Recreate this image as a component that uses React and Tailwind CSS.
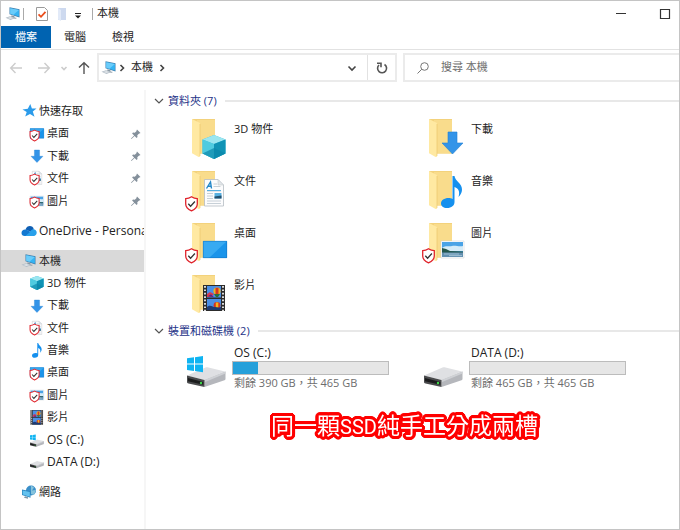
import { useState } from 'react';
import clsx from 'clsx';

function Shield({ x = 0, y = 0, scale = 1 }) {
  return (
    <g transform={`translate(${x} ${y}) scale(${scale})`}>
      <path
        d="M6.500 .8C8.300 2 10.300 2.600 12.300 2.700V8c0 3.300-2.600 5.400-5.800 6.800C3.300 13.400.7 11.300.7 8V2.700C2.700 2.600 4.700 2 6.500.8z"
        fill="#fff"
        stroke="#e0242c"
        strokeWidth="1.300"
      />
      <path d="M3.300 7.700l2.300 2.500 4.300-4.700" fill="none" stroke="#333" strokeWidth="1.300" />
    </g>
  );
}

function Folder() {
  return (
    <>
      <path d="M8 4h23v34.500H14z" fill="#f3d27c" />
      <path d="M13 5h18v33.500H13z" fill="#f9dc8c" />
      <path d="M8 4l7 3.500c.8.400 1 .8 1 1.700V40.500c0 1.500-.6 2-1.800 1.300L8 38.300z" fill="#ffe9a2" />
      <path d="M16 9v32" stroke="#e8c467" strokeWidth=".6" />
    </>
  );
}

function Cube() {
  return (
    <>
      <path d="M12 0l11.500 4.500v14L12 24 .5 18.500v-14z" fill="#35b8d4" />
      <path d="M.5 4.500L12 0l11.500 4.500L12 9z" fill="#9be6f0" />
      <path d="M.5 4.500L12 9v15L.5 18.500z" fill="#4fcbe0" />
      <path d="M12 9l11.500-4.500v14L12 24z" fill="#1093b5" />
      <path d="M.5 18.500L12 13l11.500 5.500L12 24z" fill="#0b86aa" opacity=".7" />
    </>
  );
}

function PaperSheet() {
  return (
    <>
      <path d="M.5.5h13.500l5.500 5.500v21H.5z" fill="#fcfcfd" stroke="#b5bcc3" strokeWidth=".8" />
      <path d="M14 .5V6h5.500z" fill="#e3e7ea" stroke="#c3c9cf" strokeWidth=".6" />
      <path d="M2.500 9.500L6.500 3l1 6.500M4 7.300h3.200" fill="none" stroke="#2387c8" strokeWidth="1.400" />
      <path d="M9.500 5H13M9.500 7.500h7M3 12h14M3 14.500h6M3 17h6M3 19.500h6M3 22h14M3 24.500h14" stroke="#b9c4cd" strokeWidth=".8" />
      <path d="M3 11.500h14" stroke="#58b0e0" strokeWidth="1" />
      <path d="M10.500 14h7v5.500h-7z" fill="#58b0e0" />
      <path d="M10.500 17.500l7-1v3h-7z" fill="#24506e" />
    </>
  );
}

function Photo() {
  return (
    <>
      <path d="M0 0h23v17H0z" fill="#fff" stroke="#c9ced3" strokeWidth=".5" />
      <path d="M1 1h21v15H1z" fill="#4aa3e6" />
      <path d="M1 7c4-3 7-1 10-2s7 1 11 0v5H1z" fill="#d4ebf8" />
      <path d="M1 7l4 1 4 2 13 .5v1.500H1z" fill="#24574d" />
      <path d="M1 11.500h21V16H1z" fill="#6290b0" />
      <path d="M3 13h15M8 14.600h13" stroke="#b7d2e1" strokeWidth=".7" />
    </>
  );
}

function Film() {
  return (
    <>
      <path d="M0 0h22v26H0z" fill="#2c2c2c" />
      <path d="M4 1h14v11.500H4zM4 14h14v11H4z" fill="#4b8fe6" />
      <path d="M2 1v25M20 1v25" stroke="#eee" strokeWidth="1.800" strokeDasharray="1.700 1.700" />
      <circle cx="14" cy="6" r="3.600" fill="#f0b51f" />
      <path d="M12.500 2.800h3v6.500h-3z" fill="#d63422" />
      <path d="M11 9h6l-2 3h-2z" fill="#27723a" />
      <path d="M4 9l3-2 4 2-3 3H4z" fill="#d63b52" />
      <path d="M5 11.300l3-2 3 3z" fill="#5c2484" />
      <circle cx="14" cy="20.500" r="3.400" fill="#d63422" />
      <path d="M12.800 17.500h2.500v6h-2.500z" fill="#f0b51f" />
      <path d="M4 22c3-3 6 0 8 0s4 1 6 0v3H4z" fill="#1d3a73" />
    </>
  );
}

function Note() {
  return (
    <path
      d="M11.500 0h2c.5 5 8 7.500 7.500 14-.2 2.800-1.500 5-3.500 7 1.500-5 .5-8.500-4-10v15c0 3.600-3 6-7.500 6C2.300 32 0 30 0 27.500c0-3.200 3.200-5.500 7.500-5.500 1.500 0 3 .3 4 1z"
      fill="#1590ee"
    />
  );
}

function DownArrow() {
  return <path d="M6 0h9v11h6L10.500 22 0 11h6z" fill="#3394e8" stroke="#2280d4" strokeWidth=".6" />;
}

function Desktop() {
  return (
    <>
      <path d="M0 0h24v17H0z" fill="#1a94ea" />
      <path d="M0 0h24L6 17H0z" fill="#38aaf2" />
      <path d="M.3.300h23.400v16.400H.3z" fill="none" stroke="#1477c6" strokeWidth=".6" />
    </>
  );
}

function Drive() {
  return (
    <>
      <path d="M0 8.500L18.500.5c1-.4 2-.4 3 0L38 4.500 17.500 13z" fill="#dfe0e3" />
      <path d="M17.500 13L38.500 4.500v7.500c0 .6-.3 1-1 1.300L17.500 20z" fill="#b5b7bc" />
      <path d="M17.500 13L38.500 4.500v2L17.500 15.300z" fill="#cfd1d5" />
      <path d="M0 8.500L17.500 13v7L1.500 16.500c-1-.2-1.500-.7-1.500-1.700z" fill="#4a4b4d" />
      <path d="M1 11l15.300 4v2.800L1 14.300z" fill="#1b1c1d" />
      <circle cx="14" cy="16" r="1.200" fill="#3fd94a" />
    </>
  );
}

function WindowsLogo() {
  return (
    <path d="M0 2.300L7 1.300V7.600H0zM8 1.200L16 0v7.600H8zM0 8.600h7v6.300l-7-1zM8 8.600h8v7.600l-8-1.200z" fill="#0fb4f2" />
  );
}

// large icons share a 48px box, the overlay sits over the folder
const BIG = {
  cube: <g transform="translate(18 20)"><Cube /></g>,
  doc: <g transform="translate(20 12)"><PaperSheet /></g>,
  desktop: <g transform="translate(19 22)"><Desktop /></g>,
  film: <g transform="translate(19 14)"><Film /></g>,
  down: <g transform="translate(21 17)"><DownArrow /></g>,
  note: <g transform="translate(20 9)"><Note /></g>,
  photo: <g transform="translate(20 22)"><Photo /></g>,
};

function FolderIcon({ kind, synced }) {
  return (
    <svg className="size-12 shrink-0" viewBox="0 0 48 48" aria-hidden="true">
      <Folder />
      {BIG[kind]}
      {synced && <Shield x={1} y={29} />}
    </svg>
  );
}

function DriveIcon({ system }) {
  return (
    <svg className="size-12 shrink-0" viewBox="0 0 48 48" aria-hidden="true">
      <g transform="translate(3 22)"><Drive /></g>
      {system && <g transform="translate(3 11)"><WindowsLogo /></g>}
    </svg>
  );
}

function PcIcon() {
  return (
    <>
      <path d="M4.500 1.300L14.500 3.300v8.200L4.500 8.300z" fill="#3e7fae" />
      <path d="M5.200 2.200l8.700 1.800v6.500L5.200 7.700z" fill="#35b4f3" />
      <path d="M5.200 2.200l8.700 1.800-5.500 4.700-3.200-1z" fill="#6accfa" />
      <path d="M6.500 9.200l3 1v1.300l2.500.4-1.500.8-4.500-1z" fill="#8c9aa5" />
      <path d="M.5 11.800l4.500-1.500 5.500 1.700L5.500 14z" fill="#b4bfc8" />
      <path d="M2 11.900l3.200-1 3.500 1-3.300 1.200z" fill="#dfe4e8" />
    </>
  );
}

const SMALL = {
  star: <path d="M9.300 1l1.600 4.500 4.600.1-3.700 3 1.700 5.100L9 11l-4.800 2.600 1.500-4.500L1.500 6.600l5.300-.9z" fill="#2b9bea" />,
  cloud: (
    <>
      <path d="M4.500 6.500C5.300 4 7 3 8.800 3c2 0 3.500 1.200 4 3.200L10 9z" fill="#0f5fb4" />
      <path d="M.5 10c0-2.300 1.800-3.700 4-3.500C6 6.600 9 8.500 14 11.800c-.6.800-1.300 1.200-2.300 1.200h-8C1.800 13 .5 11.800.5 10z" fill="#1378d1" />
      <path d="M12.300 6.300c2 0 3.400 1.400 3.400 3.300 0 2-1.300 3.400-3.400 3.400h-8L8.500 9.500c1.300-1.800 2.200-3 3.800-3.200z" fill="#28a0ea" />
    </>
  ),
  pc: <PcIcon />,
  cube: <g transform="translate(1 1) scale(.58)"><Cube /></g>,
  down: <g transform="translate(2 2) scale(.57)"><DownArrow /></g>,
  doc: (
    <>
      <g transform="translate(3 1) scale(.5)"><PaperSheet /></g>
      <Shield x={.5} y={3.500} scale={.78} />
    </>
  ),
  desktop: (
    <>
      <g transform="translate(1 2.500) scale(.58)"><Desktop /></g>
      <Shield x={.5} y={3.500} scale={.78} />
    </>
  ),
  photo: (
    <>
      <g transform="translate(1 3) scale(.6)"><Photo /></g>
      <Shield x={.5} y={3.500} scale={.78} />
    </>
  ),
  note: <g transform="translate(3 1) scale(.46)"><Note /></g>,
  film: <g transform="translate(1.500 1) scale(.57)"><Film /></g>,
  osdrive: (
    <>
      <g transform="translate(1 7.500) scale(.36)"><Drive /></g>
      <g transform="translate(1 2.500) scale(.36)"><WindowsLogo /></g>
    </>
  ),
  drive: <g transform="translate(1 7) scale(.36)"><Drive /></g>,
  network: (
    <>
      <circle cx="10" cy="6.500" r="5" fill="#3a8fc9" />
      <path d="M10 1.500l3 2-2 3 4-.5-2 5-3-1z" fill="#86c3dc" />
      <path d="M1 5.500l8.500 1.800v6.500L1 11z" fill="#2a86c0" />
      <path d="M1.700 6.400l7.100 1.500v4.900L1.700 10.500z" fill="#63c2ef" />
      <path d="M4 12.200l3 1v1.500l-4-1z" fill="#7e96a6" />
    </>
  ),
};

function SmallIcon({ kind }) {
  return (
    <svg className="size-4 shrink-0" viewBox="0 0 16 16" aria-hidden="true">
      {SMALL[kind]}
    </svg>
  );
}

function Pin() {
  return (
    <svg className="size-3 shrink-0" viewBox="0 0 12 12" aria-hidden="true">
      <path d="M7 1.500l3.500 3.500-1 .5-.4-.1-1.800 1.800.2 1.800-.9.900-2-2L1.500 11l-.5-.5 3.100-3.100-2-2 .9-.9 1.800.2 1.800-1.800-.1-.4z" fill="#84909b" />
    </svg>
  );
}

function Chevron({ className, d = 'M3.500 2l3 3-3 3', width = 1.6 }) {
  return (
    <svg className={clsx('size-2.5 shrink-0', className)} viewBox="0 0 10 10" aria-hidden="true">
      <path d={d} fill="none" stroke="currentColor" strokeWidth={width} />
    </svg>
  );
}

function NavArrow({ d, label, disabled }) {
  return (
    <button type="button" aria-label={label} disabled={disabled} className="text-[#555] disabled:text-[#ccc]">
      <svg className="size-3.5" viewBox="0 0 14 14" aria-hidden="true">
        <path d={d} fill="none" stroke="currentColor" strokeWidth="1.400" />
      </svg>
    </button>
  );
}

const QUICK = [
  { icon: 'desktop', label: '桌面' },
  { icon: 'down', label: '下載' },
  { icon: 'doc', label: '文件' },
  { icon: 'photo', label: '圖片' },
];

const PC = [
  { icon: 'cube', label: '3D 物件' },
  { icon: 'down', label: '下載' },
  { icon: 'doc', label: '文件' },
  { icon: 'note', label: '音樂' },
  { icon: 'desktop', label: '桌面' },
  { icon: 'photo', label: '圖片' },
  { icon: 'film', label: '影片' },
  { icon: 'osdrive', label: 'OS (C:)', latin: true },
  { icon: 'drive', label: 'DATA (D:)', latin: true },
];

const FOLDERS = [
  { icon: 'cube', label: '3D 物件' },
  { icon: 'down', label: '下載' },
  { icon: 'doc', label: '文件', synced: true },
  { icon: 'note', label: '音樂' },
  { icon: 'desktop', label: '桌面', synced: true },
  { icon: 'photo', label: '圖片', synced: true },
  { icon: 'film', label: '影片' },
];

const DRIVES = [
  { label: 'OS (C:)', free: 390, total: 465, system: true },
  { label: 'DATA (D:)', free: 465, total: 465 },
];

function TreeRow({ icon, label, child, pinned, selected, latin }) {
  return (
    <a
      href="#"
      aria-current={selected ? 'page' : undefined}
      className={clsx(
        'flex min-h-0 flex-1 items-center gap-0.5 overflow-hidden whitespace-nowrap',
        child ? 'pl-7' : 'pl-5',
        selected && 'bg-[#d9d9d9]'
      )}
    >
      <SmallIcon kind={icon} />
      <span className={clsx(latin && 'text-xs')}>{label}</span>
      {pinned && <span className="mr-0.5 ml-auto"><Pin /></span>}
    </a>
  );
}

function Section({ title, children }) {
  return (
    <section>
      <h2 className="flex h-4 items-center text-[#1e3287]">
        <Chevron className="mr-1 text-[#555]" d="M1 3l4 4 4-4" width={1.2} />
        {title}
        <span className="ml-2 h-0.5 flex-1 bg-[#e8e8e8]" />
      </h2>
      <div className="grid grid-cols-[repeat(2,237px)] pt-1.5 pl-[30px]">{children}</div>
    </section>
  );
}

function DriveTile({ label, free, total, system }) {
  const used = ((total - free) / total) * 100;
  return (
    <div className="flex h-13">
      <DriveIcon system={system} />
      <div className="flex-1">
        <p className="pl-0.5 text-xs leading-4">{label}</p>
        <div className="h-3.5 w-[157px] border border-[#bcbcbc] bg-[#e6e6e6]">
          <div className="h-full bg-[#26a0da]" style={{ width: `${used}%` }} />
        </div>
        <p className="pl-0.5 leading-4 text-[#6d6d6d]">{`剩餘 ${free} GB，共 ${total} GB`}</p>
      </div>
    </div>
  );
}

export default function App() {
  const [query, setQuery] = useState('');

  return (
    <div className="flex min-h-screen flex-col overflow-hidden border border-[#c4c4c4] bg-white font-['Open_Sans','Noto_Sans_CJK_TC',sans-serif] text-[11px] text-[#222]">
      <header>
        <div className="flex h-[25px] items-center pl-1">
          <SmallIcon kind="pc" />
          <span className="ml-0.5 h-3 w-px bg-[#aaa]" />
          <button type="button" aria-label="內容" className="ml-3">
            <svg className="h-4 w-3" viewBox="0 0 12 16" aria-hidden="true">
              <path d="M.5 1.500h8l3 3v10H.5z" fill="#fff" stroke="#9a9a9a" />
              <path d="M2.500 8.300l2.500 2.500 4.500-5" fill="none" stroke="#ea4e1b" strokeWidth="1.800" />
            </svg>
          </button>
          <button type="button" aria-label="新增資料夾" className="ml-2">
            <svg className="h-4 w-3" viewBox="0 0 12 16" aria-hidden="true">
              <path d="M2 2h8v12H2z" fill="#cdd9ef" />
              <path d="M2 2l3 2v11l-3-1.500z" fill="#e2eaf8" />
            </svg>
          </button>
          <button type="button" aria-label="自訂快速存取工具列" className="ml-1">
            <svg className="h-3.5 w-3" viewBox="0 0 12 14" aria-hidden="true">
              <path d="M3 6h6v1H3zM3 8.500h6L6 11.500z" fill="#222" />
            </svg>
          </button>
          <span className="ml-2 h-3 w-px bg-[#aaa]" />
          <h1 className="ml-1">本機</h1>
          <div className="ml-auto flex items-center gap-8 pr-2">
            <button type="button" aria-label="最小化">
              <svg className="size-3" viewBox="0 0 12 12" aria-hidden="true">
                <path d="M1 5.500h10" stroke="#333" />
              </svg>
            </button>
            <button type="button" aria-label="最大化">
              <svg className="size-3" viewBox="0 0 12 12" aria-hidden="true">
                <path d="M1.500 1.500h9v9h-9z" fill="none" stroke="#333" strokeWidth="1.200" />
              </svg>
            </button>
          </div>
        </div>

        <nav className="flex h-[24px] items-start border-b border-[#e2e2e2]">
          <button type="button" className="h-[22px] w-[50px] bg-[#0063b1] text-white">檔案</button>
          <button type="button" className="h-[22px] w-12">電腦</button>
          <button type="button" className="h-[22px] w-12">檢視</button>
        </nav>

        <div className="flex items-center pt-[3px]">
          <div className="flex items-center pl-2">
            <NavArrow label="上一頁" d="M13 7H2M6.500 2L1.700 7l4.800 5" disabled />
            <span className="w-3.5" />
            <NavArrow label="下一頁" d="M1 7h11M7.500 2l4.800 5-4.800 5" disabled />
            <Chevron className="mx-2 text-[#ccc]" d="M2.500 4l2.500 2.500L7.500 4" />
            <NavArrow label="上移" d="M7 13V2M2 6.500l5-4.800 5 4.800" />
          </div>
          <div className="ml-1.5 flex h-[29px] w-[300px] items-center border-2 border-[#ebebeb] pl-0.5">
            <SmallIcon kind="pc" />
            <Chevron className="mr-1 text-[#444]" />
            <span>本機</span>
            <Chevron className="ml-1 text-[#444]" />
            <button type="button" aria-label="先前的位置" className="mr-2.5 ml-auto text-[#444]">
              <Chevron d="M1.500 3.500L5 7l3.500-3.500" />
            </button>
            <button type="button" aria-label="重新整理" className="flex h-full w-7 items-center justify-center border-l border-[#e2e2e2]">
              <svg className="size-3" viewBox="0 0 12 12" aria-hidden="true">
                <path d="M8.500 2.500A4.500 4.500 0 1 1 3 3" fill="none" stroke="#555" strokeWidth="1.600" />
                <path d="M1 1.300h4v4" fill="none" stroke="#555" strokeWidth="1.600" />
              </svg>
            </button>
          </div>
          <label className="-mr-0.5 ml-1.5 flex h-[29px] flex-1 items-center border-2 border-[#ebebeb] pl-3">
            <svg className="size-3 shrink-0" viewBox="0 0 12 12" aria-hidden="true">
              <circle cx="7.500" cy="4.500" r="3.800" fill="none" stroke="#777" />
              <path d="M4.800 7.200L.5 11.500" stroke="#777" />
            </svg>
            <input
              type="text"
              aria-label="搜尋 本機"
              placeholder="搜尋 本機"
              value={query}
              onChange={(e) => setQuery(e.target.value)}
              className="ml-3 w-full min-w-0 outline-none placeholder:text-[#6d6d6d]"
            />
          </label>
        </div>
      </header>

      <div className="flex flex-1 pt-2">
        <nav className="w-[145px] shrink-0 border-r-2 border-[#f6f6f6] pt-2.5">
          <div className="flex h-[112px] flex-col">
            <TreeRow icon="star" label="快速存取" />
            {QUICK.map((item) => (
              <TreeRow key={item.label} {...item} child pinned />
            ))}
          </div>
          <div className="my-2 flex h-[22px]">
            <TreeRow icon="cloud" label="OneDrive - Personal" latin />
          </div>
          <div className="flex h-[223px] flex-col">
            <TreeRow icon="pc" label="本機" selected />
            {PC.map((item) => (
              <TreeRow key={item.label} {...item} child />
            ))}
          </div>
          <div className="mt-2 flex h-[22px]">
            <TreeRow icon="network" label="網路" />
          </div>
        </nav>

        <main className="min-w-0 flex-1 pt-[3px] pl-2">
          <Section title="資料夾 (7)">
            {FOLDERS.map(({ icon, label, synced }) => (
              <a key={label} href="#" className="flex h-13 gap-0.5">
                <FolderIcon kind={icon} synced={synced} />
                <span className="pt-1.5">{label}</span>
              </a>
            ))}
          </Section>
          <Section title="裝置和磁碟機 (2)">
            {DRIVES.map((drive) => (
              <DriveTile key={drive.label} {...drive} />
            ))}
          </Section>
          {/* stacked 1px shadows grow into a rounded red outline */}
          <p className="mt-3 pl-[117px] font-['Roboto','Noto_Sans_CJK_TC',sans-serif] text-[23px] leading-9 whitespace-nowrap text-white [filter:drop-shadow(1px_0_0_#f00)_drop-shadow(-1px_0_0_#f00)_drop-shadow(0_1px_0_#f00)_drop-shadow(0_-1px_0_#f00)_drop-shadow(1px_1px_0_#f00)_drop-shadow(-1px_-1px_0_#f00)_drop-shadow(1px_-1px_0_#f00)_drop-shadow(-1px_1px_0_#f00)]">
            同一顆<span className="text-[20px]">SSD</span>純手工分成兩槽
          </p>
        </main>
      </div>
    </div>
  );
}
